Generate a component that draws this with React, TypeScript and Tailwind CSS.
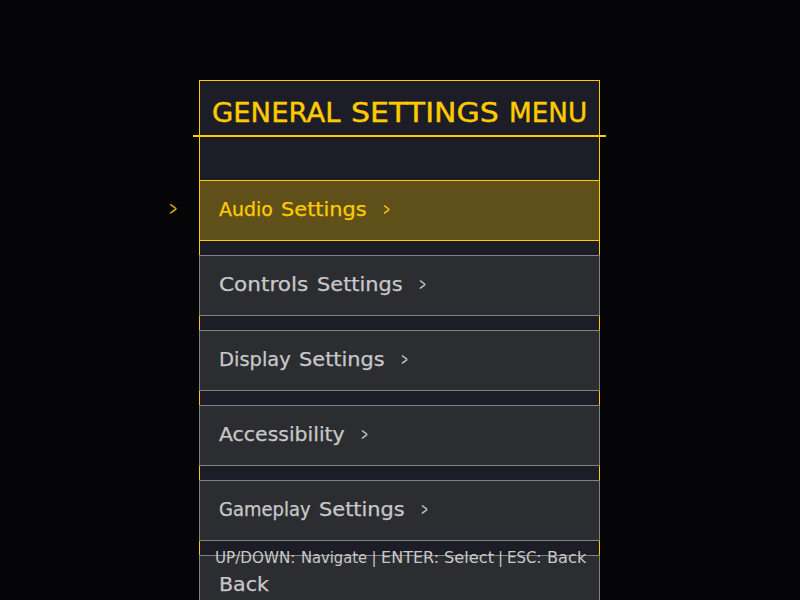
import { useLayoutEffect, useRef } from "react";

/** A word stretched horizontally so that its wide letters fill the given width. */
function Word({ text, width }: { text: string; width: number }) {
  const ref = useRef<HTMLSpanElement>(null);
  useLayoutEffect(() => {
    const el = ref.current;
    if (!el) return;
    el.style.transform = `scaleX(${(width + 1.8) / el.offsetWidth})`;
  }, [text, width]);
  return (
    <span className="block whitespace-pre" style={{ width }}>
      <span ref={ref} className="-ml-[1.2px] inline-block origin-left">
        {text}
      </span>
    </span>
  );
}

type Part = [string, number];

const title: Part[] = [
  ["GENERAL", 127],
  ["SETTINGS", 146],
  ["MENU", 76],
];

const items: { words: Part[]; arrow: boolean }[] = [
  { words: [["Audio", 52], ["Settings", 84]], arrow: true },
  { words: [["Controls", 88], ["Settings", 84]], arrow: true },
  { words: [["Display", 70], ["Settings", 84]], arrow: true },
  { words: [["Accessibility", 124]], arrow: true },
  { words: [["Gameplay", 90], ["Settings", 84]], arrow: true },
  { words: [["Back", 48]], arrow: false },
];

const hints: Part[] = [
  ["UP/DOWN:", 79],
  ["Navigate", 64],
  ["|", 2],
  ["ENTER:", 56],
  ["Select", 48],
  ["|", 1],
  ["ESC:", 33],
  ["Back", 37],
];

export default function App() {
  return (
    <div className="relative h-[600px] w-[800px] overflow-hidden bg-[#050507] pt-20 pl-[199px] font-['DejaVu_Sans',sans-serif] text-[#c8c8c8]">
      <main className="h-[521px] w-[401px] border border-b-0 border-[#ffcb00] bg-[#1c1d26]">
        <h1 className="flex h-[54px] gap-3 pt-[14px] pl-[13px] text-[26px] leading-[36px] text-[#ffcb00] [-webkit-text-stroke:0.4px_#ffcb00]">
          {title.map(([text, width]) => (
            <Word key={text} text={text} width={width} />
          ))}
        </h1>
        <div className="-mx-[7px] h-0.5 bg-[#ffcb00]" />
        <ul className="-mx-px mt-[43px] flex flex-col gap-[14px]">
          {items.map(({ words, arrow }, i) => (
            <li
              key={i}
              className={
                i === 0
                  ? "relative flex h-[61px] shrink-0 border border-[#ffcb00] bg-[#5f501a] pt-[13px] pl-5 text-[19px] leading-[30px] text-[#ffcb00]"
                  : "relative flex h-[61px] shrink-0 border border-[#828282] bg-[#2c2d31] pt-[13px] pl-5 text-[19px] leading-[30px]"
              }
            >
              {i === 0 && (
                <span className="absolute top-3 -left-[31px] w-[7px] origin-left scale-x-[0.5] text-[20px] text-[#d9ad00]">
                  &gt;
                </span>
              )}
              <div className="flex gap-2.5 [-webkit-text-stroke:0.25px_currentColor]">
                {words.map(([text, width], j) => (
                  <Word key={j} text={text} width={width} />
                ))}
              </div>
              {arrow && (
                <span className="ml-[17px] origin-left scale-x-[0.5] text-[17px]">&gt;</span>
              )}
            </li>
          ))}
        </ul>
      </main>
      <footer className="absolute top-[548px] left-[216px] flex gap-[7px] text-[15px] leading-[21px]">
        {hints.map(([text, width], i) =>
          text === "|" ? (
            <span key={i} className="flex justify-center" style={{ width }}>
              |
            </span>
          ) : (
            <Word key={i} text={text} width={width} />
          ),
        )}
      </footer>
    </div>
  );
}
